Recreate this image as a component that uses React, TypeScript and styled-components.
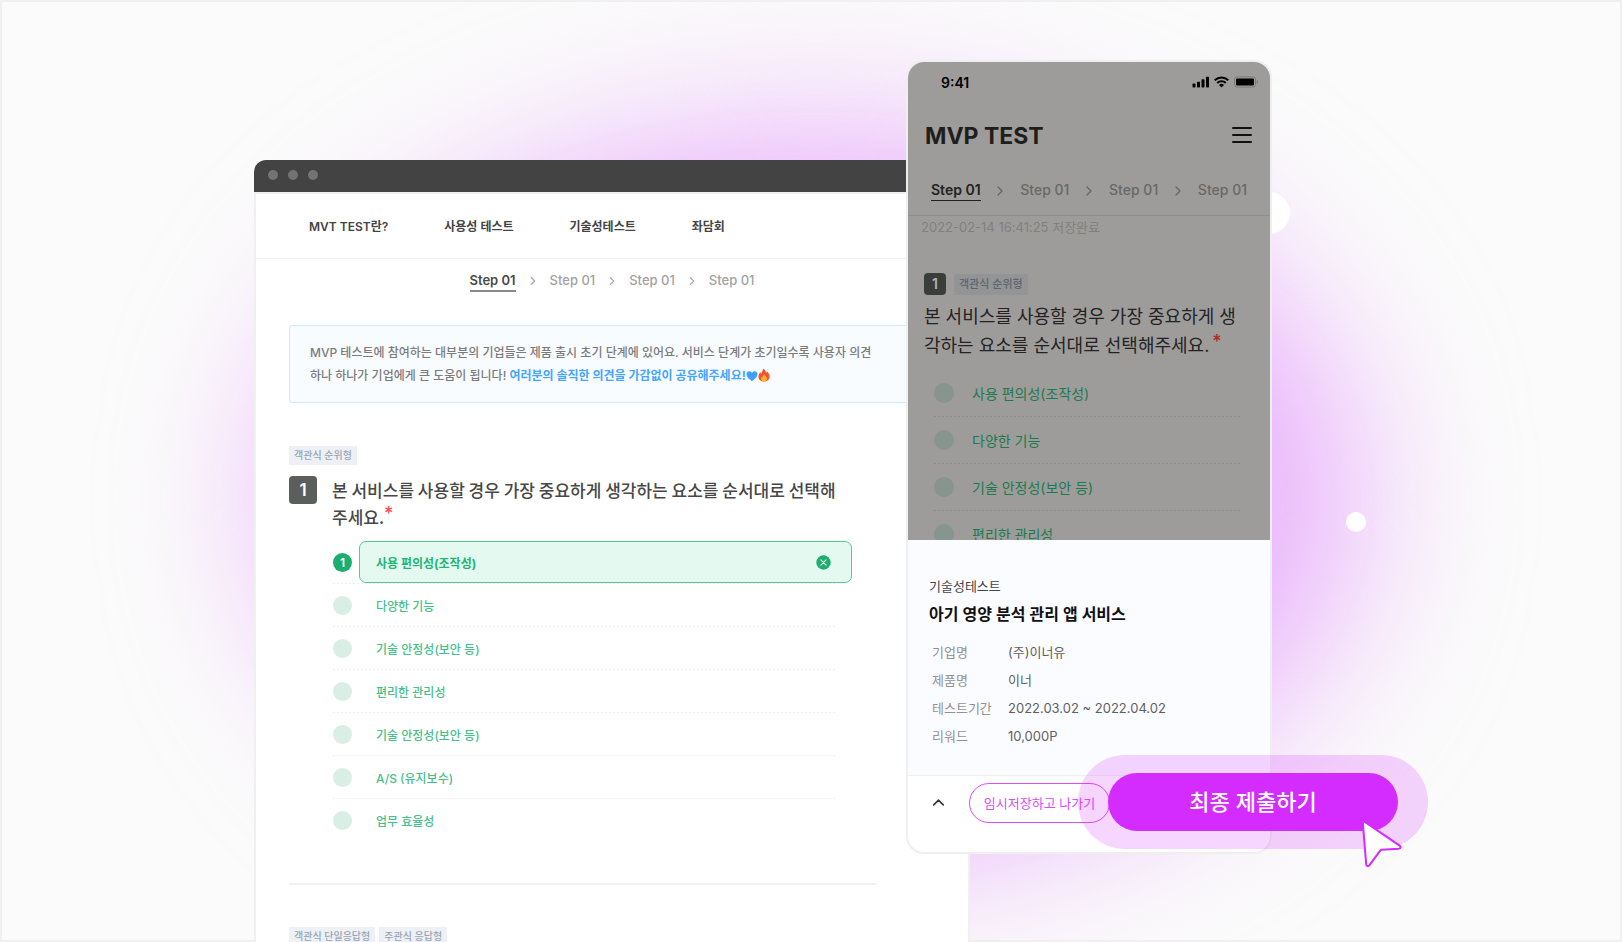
import React from "react";
import styled, { createGlobalStyle } from "styled-components";
import { ChevronRight, ChevronUp } from "lucide-react";

const latinFirst = `Inter, "Noto Sans CJK KR", sans-serif`;
const koreanFirst = `"Noto Sans CJK KR", sans-serif`;

const GlobalStyle = createGlobalStyle`
  * { box-sizing: border-box; }
  body { margin: 0; background: #fbfbfb; font-family: ${latinFirst}; }
  button { font: inherit; color: inherit; margin: 0; padding: 0; border: 0; background: none; cursor: pointer; text-align: left; }
  a { color: inherit; text-decoration: none; }
  ul, ol { list-style: none; margin: 0; padding: 0; }
  h1, h2, p { margin: 0; }
`;

const Stage = styled.main`
  position: relative;
  height: 100vh;
  overflow: hidden;
  display: flex;
  justify-content: center;
  align-items: stretch;
  padding-right: 96px;
  background: #fbfbfb;
  isolation: isolate;
`;

const Frame = styled.div`
  position: absolute;
  inset: 0;
  z-index: -1;
  border: 2px solid #f0f0f0;
`;

const Glow = styled.div`
  position: absolute;
  z-index: -2;
  left: 50%;
  top: 50%;
  width: 1090px;
  height: 740px;
  margin: -342px 0 0 -540px;
  border-radius: 50%;
  background: #e9b2fb;
  filter: blur(78px);
`;

const Bubble = styled.div<{ $size: number; $x: number; $y: number }>`
  position: absolute;
  z-index: -1;
  left: calc(50% + ${(p) => p.$x}px);
  top: ${(p) => p.$y}px;
  width: ${(p) => p.$size}px;
  height: ${(p) => p.$size}px;
  border-radius: 50%;
  background: #fff;
`;

/* Desktop browser window */

const Browser = styled.section`
  flex: 0 0 716px;
  display: flex;
  flex-direction: column;
  margin-top: 160px;
`;

const TitleBar = styled.div`
  flex: none;
  display: flex;
  align-items: center;
  gap: 10px;
  height: 32px;
  padding: 0 14px 2px;
  border-radius: 12px 12px 0 0;
  background: #434343;
`;

const Dot = styled.span`
  width: 10px;
  height: 10px;
  border-radius: 50%;
  background: #737373;
`;

const BrowserBody = styled.div`
  flex: 1;
  min-height: 0;
  border: 2px solid #f0f0f0;
  border-bottom: 0;
  background: #fff;
`;

const Nav = styled.nav`
  display: flex;
  align-items: center;
  gap: 56px;
  height: 65px;
  padding: 0 53px 2px;
  border-bottom: 1px solid #f3f3f3;
  font-size: 12px;
  font-weight: 600;
  color: #444;
  white-space: nowrap;
`;

const Steps = styled.ol<{ $mobile?: boolean }>`
  display: flex;
  align-items: center;
  justify-content: ${(p) => (p.$mobile ? "space-between" : "center")};
  gap: ${(p) => (p.$mobile ? "0" : "10px")};
  padding: ${(p) => (p.$mobile ? "0 23px" : "11px 0 0")};
  font-size: ${(p) => (p.$mobile ? "14px" : "13px")};
  line-height: 20px;
  font-weight: 500;
  color: ${(p) => (p.$mobile ? "#696866" : "#a2a2a2")};
  li { display: flex; align-items: center; }
  svg { color: ${(p) => (p.$mobile ? "#696866" : "#aaa")}; }
`;

const StepLink = styled.a<{ $active?: boolean; $mobile?: boolean }>`
  border-bottom: ${(p) => (p.$mobile ? "1px" : "2px")} solid
    ${(p) => (p.$active ? (p.$mobile ? "#222" : "#8a8a8a") : "transparent")};
  color: ${(p) => (p.$active ? (p.$mobile ? "#222" : "#4a4a4a") : "inherit")};
  font-weight: ${(p) => (p.$active ? 600 : 500)};
`;

const Survey = styled.div`
  padding: 0 33px;
`;

const Notice = styled.p`
  margin-top: 33px;
  padding: 15px 20px;
  border: 1px solid #cfe8fb;
  border-radius: 3px;
  background: #f8fcff;
  font-size: 12px;
  line-height: 23px;
  font-weight: 500;
  color: #7b7b7b;
  white-space: nowrap;
  strong { color: #45a5ff; font-weight: 700; }
  svg { vertical-align: -2px; }
`;

const Tags = styled.div`
  display: flex;
  gap: 4px;
`;

const Tag = styled.span<{ $mobile?: boolean }>`
  padding: 0 5px;
  background: ${(p) => (p.$mobile ? "#929496" : "#edf1f6")};
  color: ${(p) => (p.$mobile ? "#5d666e" : "#98a4b3")};
  font-size: ${(p) => (p.$mobile ? "11px" : "10px")};
  line-height: ${(p) => (p.$mobile ? "21px" : "19px")};
  font-weight: 500;
  white-space: nowrap;
`;

const FirstTags = styled(Tags)`
  margin-top: 43px;
`;

const Question = styled.div`
  display: flex;
  align-items: flex-start;
  gap: 15px;
  margin-top: 11px;
`;

const NumberBadge = styled.span<{ $mobile?: boolean }>`
  flex: none;
  width: ${(p) => (p.$mobile ? "22px" : "28px")};
  line-height: ${(p) => (p.$mobile ? "22px" : "28px")};
  border-radius: 4px;
  background: ${(p) => (p.$mobile ? "#3a3e3b" : "#5a5f5c")};
  color: ${(p) => (p.$mobile ? "#b4b3b1" : "#fff")};
  font-size: ${(p) => (p.$mobile ? "14px" : "17px")};
  font-weight: 600;
  text-align: center;
`;

const QuestionText = styled.h2<{ $mobile?: boolean }>`
  font-family: ${(p) => (p.$mobile ? latinFirst : koreanFirst)};
  font-size: ${(p) => (p.$mobile ? "18px" : "17px")};
  line-height: ${(p) => (p.$mobile ? "29px" : "27px")};
  font-weight: ${(p) => (p.$mobile ? 400 : 500)};
  color: ${(p) => (p.$mobile ? "#232323" : "#484848")};
  white-space: nowrap;
  sup {
    font-family: Inter, sans-serif;
    font-size: 18px;
    font-weight: 500;
    line-height: 0;
    vertical-align: 4px;
    margin-left: ${(p) => (p.$mobile ? "3px" : "0")};
    color: ${(p) => (p.$mobile ? "#b0282a" : "#ff4b4b")};
  }
`;

const Options = styled.ul<{ $mobile?: boolean }>`
  margin: ${(p) => (p.$mobile ? "10px 28px 0 26px" : "11px 99px 0 44px")};
`;

const Option = styled.li<{ $mobile?: boolean }>`
  display: flex;
  height: ${(p) => (p.$mobile ? "47px" : "43px")};
  padding-bottom: 1px;
  background: repeating-linear-gradient(
      to right,
      ${(p) => (p.$mobile ? "#8e8c8a" : "#efefef")} 0 2px,
      transparent 2px 4px
    )
    bottom / 100% 1px no-repeat;
  &:last-child { background: none; }
`;

const OptionButton = styled.button<{ $mobile?: boolean }>`
  flex: 1;
  display: flex;
  align-items: center;
  gap: ${(p) => (p.$mobile ? "18px" : "7px")};
  font-size: ${(p) => (p.$mobile ? "14px" : "12px")};
  font-weight: ${(p) => (p.$mobile ? 400 : 500)};
  color: ${(p) => (p.$mobile ? "#1b7a50" : "#45bf8b")};
  white-space: nowrap;
`;

const Rank = styled.span<{ $mobile?: boolean; $active?: boolean }>`
  flex: none;
  width: ${(p) => (p.$mobile ? "20px" : "19px")};
  height: ${(p) => (p.$mobile ? "20px" : "19px")};
  line-height: 19px;
  border-radius: 50%;
  background: ${(p) => (p.$active ? "#1bae6e" : p.$mobile ? "#86958d" : "#d9eee5")};
  color: #fff;
  font-size: 12px;
  font-weight: 600;
  text-align: center;
`;

const OptionLabel = styled.span<{ $selected?: boolean; $mobile?: boolean }>`
  flex: 1;
  display: flex;
  align-items: center;
  justify-content: space-between;
  align-self: stretch;
  margin-right: ${(p) => (p.$selected ? "-16px" : "0")};
  padding: ${(p) => (p.$mobile ? "0" : "0 20px 0 16px")};
  border: ${(p) => (p.$mobile ? "0" : "1px")} solid ${(p) => (p.$selected ? "#58c897" : "transparent")};
  border-radius: 7px;
  background: ${(p) => (p.$selected ? "#e4f9f0" : "transparent")};
  color: ${(p) => (p.$selected ? "#24b377" : "inherit")};
  font-weight: ${(p) => (p.$selected ? 700 : "inherit")};
`;

const Divider = styled.hr`
  margin: 41px 58px 42px 0;
  border: 0;
  border-top: 2px solid #f2f2f2;
`;

/* Phone */

const Phone = styled.section`
  position: relative;
  flex: 0 0 366px;
  align-self: flex-start;
  margin: 60px 0 0 -64px;
  border: 2px solid #eeefef;
  border-radius: 18px;
  background: #fff;
`;

const Dimmed = styled.div`
  height: 478px;
  overflow: hidden;
  border-radius: 16px 16px 0 0;
  background: #9e9c9a;
`;

const StatusBar = styled.div`
  display: flex;
  align-items: center;
  justify-content: space-between;
  height: 40px;
  padding: 0 12px 0 33px;
  font-size: 14px;
  font-weight: 600;
  color: #000;
`;

const AppBar = styled.header`
  display: flex;
  align-items: center;
  justify-content: space-between;
  height: 67px;
  padding: 0 18px 0 17px;
`;

const AppTitle = styled.h1`
  font-size: 23px;
  line-height: 28px;
  font-weight: 700;
  color: #1e1e1d;
`;

const MenuButton = styled.button`
  display: flex;
  padding-bottom: 2px;
`;

const PhoneSteps = styled.nav`
  height: 47px;
  padding-top: 11px;
  border-bottom: 1px solid #918f8e;
`;

const SavedAt = styled.p`
  padding: 0 13px;
  font-size: 13px;
  line-height: 22px;
  color: #81807e;
`;

const PhoneTags = styled.div`
  display: flex;
  align-items: center;
  gap: 8px;
  margin: 35px 16px 7px;
`;

const PhoneQuestion = styled.div`
  padding: 0 16px;
`;

const Sheet = styled.div`
  height: 236px;
  padding: 35px 21px 0;
  border-bottom: 1px solid #f0f0f2;
  background: #fbfcff;
`;

const SheetKind = styled.p`
  font-size: 13px;
  line-height: 22px;
  color: #444;
`;

const SheetTitle = styled.h2`
  margin: 4px 0 11px;
  font-size: 16px;
  line-height: 26px;
  font-weight: 600;
  color: #111;
`;

const Info = styled.table`
  margin-left: 3px;
  border-collapse: collapse;
  font-size: 13px;
  line-height: 20px;
  th, td { height: 28px; padding: 0; text-align: left; }
  th { width: 76px; font-weight: 400; color: #929292; }
  td { font-weight: 400; color: #5f5f5f; }
`;

const PhoneFooter = styled.footer`
  display: flex;
  align-items: flex-start;
  height: 76px;
  padding: 7px 0 0 21px;
`;

const IconButton = styled.button`
  display: flex;
  margin: 10px 21px 0 0;
  color: #333;
`;

const SaveButton = styled.button`
  width: 141px;
  height: 40px;
  padding-bottom: 2px;
  border: 1px solid #d94cff;
  border-radius: 20px;
  color: #d94cff;
  font-size: 13px;
  text-align: center;
  white-space: nowrap;
`;

const SubmitHalo = styled.div`
  position: absolute;
  right: -158px;
  bottom: 3px;
  padding: 18px 30px;
  border-radius: 47px;
  background: rgba(212, 43, 255, 0.2);
`;

const SubmitButton = styled.button`
  width: 290px;
  height: 58px;
  padding-bottom: 4px;
  border-radius: 29px;
  background: #d42bff;
  color: #fff;
  font-size: 22px;
  font-weight: 500;
  text-align: center;
`;

const Cursor = styled.svg`
  position: absolute;
  right: 24px;
  bottom: -20px;
`;

const HeartIcon = () => (
  <svg width="12" height="12" viewBox="0 0 12 12" aria-hidden="true">
    <path d="M6 11.2C3.8 9.6.5 7 .5 4.2.5 2.3 1.8 1.2 3.3 1.2 4.5 1.2 5.5 1.9 6 3 6.5 1.9 7.5 1.2 8.7 1.2c1.5 0 2.8 1.1 2.8 3C11.5 7 8.2 9.6 6 11.2Z" fill="#3f9fff" />
  </svg>
);

const FireIcon = () => (
  <svg width="12" height="14" viewBox="0 0 12 14" aria-hidden="true">
    <path d="M5 .4c2.4 1.3 3 3.1 3 4.7.6-.4.9-1 .9-1.8C10.5 4.8 11.6 6.7 11.6 8.6c0 3-2.4 5-5.600 5S.5 11.7.5 8.8c0-2 .9-3.400 1.900-4.700.1 1 .4 1.500.9 1.900C3.500 3.600 5.300 2.600 5 .4Z" fill="#f4522d" />
    <path d="M6.200 6c.1 1.700 2.800 2.700 2.800 4.800 0 1.500-1.200 2.600-3 2.600s-3-1.100-3-2.700c0-1 .5-1.800 1-2.400.1.600.4.900.8 1.100C4.700 8 5.900 7.200 6.200 6Z" fill="#ffb526" />
  </svg>
);

const ClearIcon = () => (
  <svg width="15" height="15" viewBox="0 0 15 15" aria-hidden="true">
    <circle cx="7.5" cy="7.5" r="7.2" fill="#1bae6e" />
    <path d="M4.9 4.9l5.2 5.2M10.1 4.9l-5.2 5.2" stroke="#d9f7e9" strokeWidth="1.3" strokeLinecap="round" />
  </svg>
);

const StatusIcons = () => (
  <svg width="66" height="12" viewBox="0 0 66 12" aria-hidden="true">
    <rect x="0.5" y="7.5" width="3" height="4" rx="0.8" />
    <rect x="5" y="5.7" width="3" height="5.8" rx="0.8" />
    <rect x="9.5" y="3.3" width="3" height="8.2" rx="0.8" />
    <rect x="14" y="0.8" width="3" height="10.7" rx="0.8" />
    <g fill="none" stroke="#000" strokeWidth="1.9">
      <path d="M22.700 4.300a9.700 9.700 0 0 1 13.600 0" />
      <path d="M25.200 7a6.100 6.100 0 0 1 8.600 0" />
    </g>
    <path d="M27 9a3.600 3.600 0 0 1 5 0l-2.500 2.600Z" />
    <rect x="42.5" y="0.9" width="21" height="10.2" rx="2.8" fill="none" stroke="#7d7b7a" />
    <rect x="44" y="2.4" width="18" height="7.2" rx="1.4" />
    <path d="M64.700 4.200c1 .3 1.300 1 1.300 1.800s-.3 1.500-1.300 1.800Z" fill="#7d7b7a" />
  </svg>
);

const MenuIcon = () => (
  <svg width="20" height="18" viewBox="0 0 20 18" aria-hidden="true">
    <path d="M1 2h18M1 9h18M1 16h18" stroke="#111" strokeWidth="2" strokeLinecap="round" />
  </svg>
);

const steps = ["Step 01", "Step 01", "Step 01", "Step 01"];

const StepList = ({ mobile }: { mobile?: boolean }) => (
  <Steps $mobile={mobile}>
    {steps.map((label, i) => (
      <React.Fragment key={i}>
        {i > 0 && (
          <li aria-hidden="true">
            <ChevronRight size={mobile ? 16 : 14} strokeWidth={2} />
          </li>
        )}
        <li>
          <StepLink href="#" $active={i === 0} $mobile={mobile} aria-current={i === 0 ? "step" : undefined}>
            {label}
          </StepLink>
        </li>
      </React.Fragment>
    ))}
  </Steps>
);

const desktopOptions = [
  "사용 편의성(조작성)",
  "다양한 기능",
  "기술 안정성(보안 등)",
  "편리한 관리성",
  "기술 안정성(보안 등)",
  "A/S (유지보수)",
  "업무 효율성",
];

const phoneOptions = desktopOptions.slice(0, 4);

const info = [
  ["기업명", "(주)이너유"],
  ["제품명", "이너"],
  ["테스트기간", "2022.03.02 ~ 2022.04.02"],
  ["리워드", "10,000P"],
];

const BrowserWindow = () => (
  <Browser>
    <TitleBar>
      <Dot />
      <Dot />
      <Dot />
    </TitleBar>
    <BrowserBody>
      <Nav>
        <a href="#">MVT TEST란?</a>
        <a href="#">사용성 테스트</a>
        <a href="#">기술성테스트</a>
        <a href="#">좌담회</a>
      </Nav>
      <StepList />
      <Survey>
        <Notice>
          MVP 테스트에 참여하는 대부분의 기업들은 제품 출시 초기 단계에 있어요. 서비스 단계가 초기일수록 사용자 의견
          <br />
          하나 하나가 기업에게 큰 도움이 됩니다! <strong>여러분의 솔직한 의견을 가감없이 공유해주세요!</strong>
          <HeartIcon />
          <FireIcon />
        </Notice>
        <FirstTags>
          <Tag>객관식 순위형</Tag>
        </FirstTags>
        <Question>
          <NumberBadge>1</NumberBadge>
          <QuestionText>
            본 서비스를 사용할 경우 가장 중요하게 생각하는 요소를 순서대로 선택해
            <br />
            주세요.<sup>*</sup>
          </QuestionText>
        </Question>
        <Options>
          {desktopOptions.map((label, i) => (
            <Option key={i}>
              <OptionButton type="button" aria-pressed={i === 0}>
                <Rank $active={i === 0}>{i === 0 ? "1" : ""}</Rank>
                <OptionLabel $selected={i === 0}>
                  {label}
                  {i === 0 && <ClearIcon />}
                </OptionLabel>
              </OptionButton>
            </Option>
          ))}
        </Options>
        <Divider />
        <Tags>
          <Tag>객관식 단일응답형</Tag>
          <Tag>주관식 응답형</Tag>
        </Tags>
      </Survey>
    </BrowserBody>
  </Browser>
);

const PhoneScreen = () => (
  <Phone>
    <Dimmed>
      <StatusBar>
        <span>9:41</span>
        <StatusIcons />
      </StatusBar>
      <AppBar>
        <AppTitle>MVP TEST</AppTitle>
        <MenuButton type="button" aria-label="메뉴">
          <MenuIcon />
        </MenuButton>
      </AppBar>
      <PhoneSteps>
        <StepList mobile />
      </PhoneSteps>
      <SavedAt>2022-02-14 16:41:25 저장완료</SavedAt>
      <PhoneTags>
        <NumberBadge $mobile>1</NumberBadge>
        <Tag $mobile>객관식 순위형</Tag>
      </PhoneTags>
      <PhoneQuestion>
        <QuestionText $mobile>
          본 서비스를 사용할 경우 가장 중요하게 생<br />
          각하는 요소를 순서대로 선택해주세요.<sup>*</sup>
        </QuestionText>
      </PhoneQuestion>
      <Options $mobile>
        {phoneOptions.map((label) => (
          <Option key={label} $mobile>
            <OptionButton type="button" $mobile>
              <Rank $mobile />
              <OptionLabel $mobile>{label}</OptionLabel>
            </OptionButton>
          </Option>
        ))}
      </Options>
    </Dimmed>
    <Sheet>
      <SheetKind>기술성테스트</SheetKind>
      <SheetTitle>아기 영양 분석 관리 앱 서비스</SheetTitle>
      <Info>
        <tbody>
          {info.map(([name, value]) => (
            <tr key={name}>
              <th scope="row">{name}</th>
              <td>{value}</td>
            </tr>
          ))}
        </tbody>
      </Info>
    </Sheet>
    <PhoneFooter>
      <IconButton type="button" aria-label="접기">
        <ChevronUp size={19} strokeWidth={2} />
      </IconButton>
      <SaveButton type="button">임시저장하고 나가기</SaveButton>
    </PhoneFooter>
    <SubmitHalo>
      <SubmitButton type="button">최종 제출하기</SubmitButton>
      <Cursor width="44" height="50" viewBox="0 0 44 50" aria-hidden="true">
        <path
          d="M2.600 1.400 39.600 26.600c1.700 1.100 1.200 2.900-.8 3.100L21.500 30.800a3 3 0 0 0-1.500 1L9.500 46.200c-1.200 1.500-3.100 1.100-3.300-.8Z"
          fill="#fff"
          stroke="#d42bff"
          strokeWidth="2"
          strokeLinejoin="round"
        />
      </Cursor>
    </SubmitHalo>
  </Phone>
);

export default function App() {
  return (
    <>
      <GlobalStyle />
      <Stage>
        <Glow />
        <Frame />
        <Bubble $size={42} $x={437} $y={192} />
        <Bubble $size={20} $x={535} $y={512} />
        <BrowserWindow />
        <PhoneScreen />
      </Stage>
    </>
  );
}
